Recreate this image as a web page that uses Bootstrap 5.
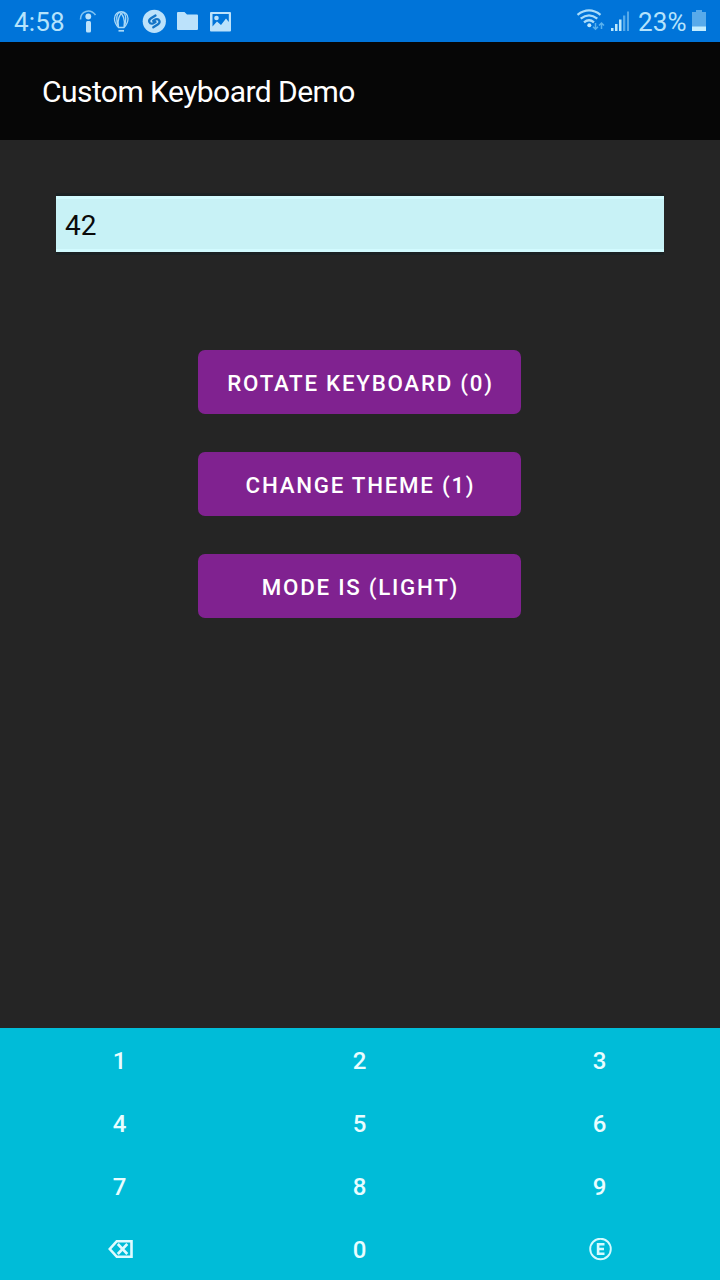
<!DOCTYPE html>
<html lang="en">
<head>
<meta charset="utf-8">
<meta name="viewport" content="width=device-width, initial-scale=1">
<title>Custom Keyboard Demo</title>
<link href="https://cdn.jsdelivr.net/npm/bootstrap@5.3.0/dist/css/bootstrap.min.css" rel="stylesheet">
<style>
body{font-family:Roboto,"Liberation Sans",sans-serif;background:#252525;color:#fff}
.status{height:42px;background:#0074d9;color:#b5e3fc;font-size:26px;line-height:40px;padding:2px 13px 0 14px}
.status svg{display:block}
.clock{width:64px;letter-spacing:.15px}
.battery{margin-left:4px}
.percent{width:50px;letter-spacing:.1px;padding-left:1px}
.appbar{height:98px;background:#060606;padding:2px 42px 0}
.apptitle{font-size:30px;line-height:1;letter-spacing:-.55px}
.fieldwrap{padding:56px 8px 0}
.entry,.entry:focus{height:56px;background:#c8f2f6;color:#0a0a0a;border:solid #d2fbff;border-width:3px 0;font-size:28px;line-height:1;padding:2px 9px 0;box-shadow:0 3px 0 #1c2224,0 -3px 0 #1c2224}
.actions{width:323px;gap:38px;margin:98px 1px 0 0}
.btn.action{height:64px;background:#802290;color:#fff;border:0;border-radius:7px;font-size:22.3px;font-weight:500;letter-spacing:1.75px;line-height:62px;padding:2px 0 0 2px;white-space:nowrap}
.keypad{height:252px;background:#00bcd8}
.btn.pad{height:63px;border:0;border-radius:0;color:#e9fdff;font-size:24px;font-weight:500;line-height:63px;padding:2px 1px 0 0}
</style>
</head>
<body class="vh-100 d-flex flex-column overflow-hidden">
<header>
  <div class="status d-flex justify-content-between">
    <div class="d-flex">
      <span class="clock">4:58</span>
      <svg width="160" height="40" viewBox="78 2 160 40" fill="#bce2fb">
        <circle cx="88.3" cy="16.500" r="2.900"/><rect x="86" y="21" width="5" height="11.500" rx="1.500"/>
        <path d="M80.500 19.500C80.500 11 90 8 95.500 15" fill="none" stroke="#7fc3f2" stroke-width="1.600"/>
        <g fill="none" stroke="#a9d9f8" stroke-width="1.300"><path d="M118.500 27.500C116 25 114.500 22 114.500 18.500C114.500 9.500 128 9.500 128 18.500C128 22 126.500 25 124 27.500Z"/><path d="M118.500 27C117 20 119.500 14 123 12.500C126.500 14 126.500 21 124 27M124 27C125.500 20 123 14 119.500 12.500C116 14 116 21 118.500 27"/><path d="M118.500 30.800H124" stroke-width="1.700"/></g>
        <circle cx="154.300" cy="21.300" r="11.600"/>
        <path d="M155.500 15.500L151 18.300C147.500 20.500 149.500 24.500 153 23.500L155.500 22M153.300 27.300L157.700 24.500C161.200 22.300 159.200 18.300 155.700 19.300L153.200 20.800" fill="none" stroke="#1474c6" stroke-width="2.300" stroke-linecap="round"/>
        <path d="M178 12h6.500l2.500 2.500h10a1 1 0 0 1 1 1V29a1 1 0 0 1-1 1H178a1 1 0 0 1-1-1V13a1 1 0 0 1 1-1Z"/>
        <path fill-rule="evenodd" d="M211 12h19a1 1 0 0 1 1 1v17.500a1 1 0 0 1-1 1H211a1 1 0 0 1-1-1V13a1 1 0 0 1 1-1ZM212.500 14v12.500l4.500-5 4 3.500 5-6.500 2.800 3.500V14Z"/><circle cx="216.500" cy="18" r="2.300"/>
      </svg>
    </div>
    <div class="d-flex">
      <svg width="61" height="40" viewBox="576 2 61 40">
        <g fill="none" stroke="#a9dcfa" stroke-width="2.300"><path d="M577.500 14.800Q589 6 600.500 14.800M580.700 18.700Q589 12 597.300 18.700M584 22.300Q589 18.200 594 22.300"/></g>
        <circle cx="589.300" cy="25.300" r="2" fill="#c0e8fc"/>
        <path d="M595.500 23v6M593 26.800l2.500 2.500 2.500-2.500M601.500 29v-6M599 25.500l2.500-2.500 2.500 2.500" fill="none" stroke="#59b1ed" stroke-width="1.500"/>
        <path d="M611 28h2.500v3H611zM615 24h2.500v7H615zM619 19.500h2.500V31H619z" fill="#bce7fc"/>
        <path d="M623 15.500h2.300V31H623zM627 11.500h2V31H627z" fill="#55a9e9"/>
      </svg>
      <span class="percent">23%</span>
      <svg class="battery" width="16" height="40" viewBox="691 2 16 40"><path d="M696 10h6v2h4v19h-14V12h4z" fill="#58aaea"/><path d="M692 26.500h14V31h-14z" fill="#c3edff"/></svg>
    </div>
  </div>
  <nav class="appbar d-flex align-items-center"><h1 class="apptitle fw-normal m-0">Custom Keyboard Demo</h1></nav>
</header>
<main class="flex-grow-1 d-flex flex-column align-items-center px-5 pt-0">
  <div class="fieldwrap w-100"><input class="form-control entry rounded-0" type="text" value="42" aria-label="Number"></div>
  <div class="actions d-grid">
    <button class="btn action" type="button">ROTATE KEYBOARD (0)</button>
    <button class="btn action" type="button">CHANGE THEME (1)</button>
    <button class="btn action" type="button">MODE IS (LIGHT)</button>
  </div>
</main>
<footer class="keypad row g-0 flex-shrink-0">
  <button class="btn pad col-4">1</button><button class="btn pad col-4">2</button><button class="btn pad col-4">3</button>
  <button class="btn pad col-4">4</button><button class="btn pad col-4">5</button><button class="btn pad col-4">6</button>
  <button class="btn pad col-4">7</button><button class="btn pad col-4">8</button><button class="btn pad col-4">9</button>
  <button class="btn pad col-4 d-flex justify-content-center align-items-center" aria-label="Delete"><svg width="26" height="20" viewBox="-.8 0 26 20" fill="none" stroke="#e0fbff" stroke-width="2.600"><path d="M9 1.200H23.700V16.800H9L2 9ZM10 4L19.500 14M19.500 4L10 14"/></svg></button>
  <button class="btn pad col-4">0</button>
  <button class="btn pad col-4 d-flex justify-content-center align-items-center" aria-label="Enter"><svg width="24" height="24" viewBox="-.5 0 24 24" fill="none" stroke="#d5faff"><circle cx="12" cy="11" r="10.300" stroke-width="1.900"/><path d="M16 6.300H9.600V15.800H16M9.600 11H15.500" stroke-width="2.600"/></svg></button>
</footer>
<script src="https://cdn.jsdelivr.net/npm/bootstrap@5.3.0/dist/js/bootstrap.bundle.min.js"></script>
</body>
</html>
